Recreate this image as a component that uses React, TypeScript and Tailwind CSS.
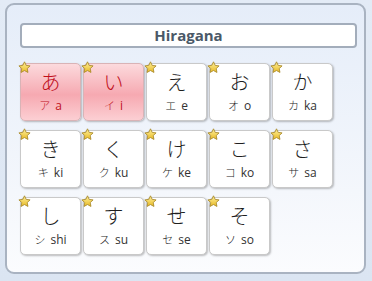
import React from "react"

type Kana = { h: string; k: string; r: string; on?: boolean }

const KANA: Kana[] = [
  { h: "あ", k: "ア", r: "a", on: true },
  { h: "い", k: "イ", r: "i", on: true },
  { h: "え", k: "エ", r: "e" },
  { h: "お", k: "オ", r: "o" },
  { h: "か", k: "カ", r: "ka" },
  { h: "き", k: "キ", r: "ki" },
  { h: "く", k: "ク", r: "ku" },
  { h: "け", k: "ケ", r: "ke" },
  { h: "こ", k: "コ", r: "ko" },
  { h: "さ", k: "サ", r: "sa" },
  { h: "し", k: "シ", r: "shi" },
  { h: "す", k: "ス", r: "su" },
  { h: "せ", k: "セ", r: "se" },
  { h: "そ", k: "ソ", r: "so" },
]

function Star() {
  return (
    <svg className="absolute -left-[3px] -top-[3px]" width="13" height="13" viewBox="0 0 24 24">
      <defs>
        <linearGradient id="sg" x1="0" y1="0" x2="0" y2="1">
          <stop offset="0" stopColor="#fff2a0" />
          <stop offset="1" stopColor="#e8b923" />
        </linearGradient>
      </defs>
      <path
        d="M12 1.5l3.1 6.6 7.2.9-5.3 5 1.4 7.1L12 17.6 5.6 21.1 7 14l-5.3-5 7.2-.9z"
        fill="url(#sg)"
        stroke="#a8892a"
        strokeWidth="1.6"
        strokeLinejoin="round"
      />
    </svg>
  )
}

function Card({ kana }: { kana: Kana }) {
  const tone = kana.on
    ? "bg-[linear-gradient(to_bottom,#fcdadd,#f6a9b1_55%,#fccfd3)] text-[#c0101c] border-[#d9b3b6]"
    : "bg-white text-[#1e1e1e] border-[#c9c9c9]"
  return (
    <div
      className={`relative flex h-[58px] w-[61px] flex-col items-center rounded-[5px] border shadow-[1px_1px_2px_rgba(0,0,0,0.25)] ${tone}`}
    >
      <Star />
      <div className="mt-[6px] text-[20px] font-light leading-[24px] font-['Noto_Sans_CJK_JP',sans-serif]">{kana.h}</div>
      <div className="mt-[4px] flex items-baseline gap-[5px] text-[11px] leading-[14px]">
        <span className="font-light font-['Noto_Sans_CJK_JP',sans-serif]">{kana.k}</span>
        <span className={`text-[12px] font-['Open_Sans',sans-serif] ${kana.on ? "" : "text-[#333]"}`}>{kana.r}</span>
      </div>
    </div>
  )
}

export default function App() {
  return (
    <div className="h-[281px] w-[372px] overflow-hidden bg-[linear-gradient(to_bottom,#e3ebf6,#dbe5f2)] pl-[5px] pt-[3px]">
      <div className="h-[271px] w-[361px] rounded-[9px] border-2 border-[#a9b3c1] bg-[linear-gradient(to_bottom,#e5edf9,#f4f7fc_70%,#fbfcfe)] pl-[13px] pt-[18px]">
        <div className="flex h-[25px] w-[337px] items-center justify-center rounded-[4px] border-2 border-[#a3adbb] bg-white text-[15px] font-bold text-[#4a5867] font-['Open_Sans',sans-serif]">
          Hiragana
        </div>
        <div className="mt-[15px] grid grid-cols-[repeat(5,61px)] gap-x-[2px] gap-y-[9px]">
          {KANA.map((k) => (
            <Card key={k.h} kana={k} />
          ))}
        </div>
      </div>
    </div>
  )
}
